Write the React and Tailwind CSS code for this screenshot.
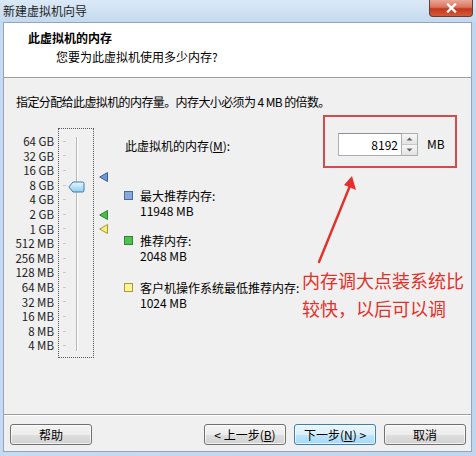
import React from "react";

const ROWS = ["64 GB", "32 GB", "16 GB", "8 GB", "4 GB", "2 GB", "1 GB", "512 MB", "256 MB", "128 MB", "64 MB", "32 MB", "16 MB", "8 MB", "4 MB"];

function Tri({ fill, stroke, top }) {
  return (
    <svg className="absolute left-[5px]" style={{ top }} width="9" height="10" viewBox="0 0 9 10">
      <polygon points="8.5,0.5 8.5,9.5 0.7,5" fill={fill} stroke={stroke} strokeWidth="1" />
    </svg>
  );
}

function Btn({ children, primary }) {
  return (
    <div
      className={
        "w-[82px] h-[21px] rounded-[3px] border flex items-center justify-center text-[12px] text-black shadow-[inset_0_0_0_1px_rgba(255,255,255,0.7)] " +
        (primary
          ? "border-[#3c7fb1] bg-[linear-gradient(#eaf6fd,#d9f0fc_50%,#bee6fd_51%,#a7d9f5)]"
          : "border-[#707070] bg-[linear-gradient(#f4f4f4,#ececec_50%,#dfdfdf_51%,#d2d2d2)]")
      }
    >
      {children}
    </div>
  );
}

function Item({ sq, border, label, value, mt }) {
  return (
    <div className={"flex " + mt}>
      <div className={"w-[9px] h-[9px] mt-[3px] border " + sq + " " + border} />
      <div className="ml-[7px] leading-[15px]">
        <div>{label}</div>
        <div>{value}</div>
      </div>
    </div>
  );
}

export default function App() {
  return (
    <div className="w-[476px] h-[456px] relative overflow-hidden bg-[linear-gradient(90deg,#c7dbf0,#c0d6ee)] font-['Noto_Sans_CJK_SC','Noto_Sans',sans-serif] text-[12px] text-black flex flex-col">
      {/* title bar */}
      <div className="h-[22px] flex items-start justify-between bg-[linear-gradient(#dbe9f7,#c4d9ef)]">
        <div className="pl-[3px] mt-[3px] leading-[16px] text-[12px] text-[#1e1e1e]">新建虚拟机向导</div>
        <div className="mr-[3px] w-[44px] h-[17px] rounded-b-[4px] border border-t-0 border-[#6b3a30] bg-[linear-gradient(#eba797,#d8735f_45%,#c2391d_55%,#d65a35)] flex items-center justify-center">
          <svg width="11" height="10" viewBox="0 0 11 10">
            <path d="M2 1.5 L9 8.5 M9 1.5 L2 8.5" stroke="#ffffff" strokeWidth="2.4" strokeLinecap="square" />
          </svg>
        </div>
      </div>

      {/* panel */}
      <div className="ml-[3px] mr-[4px] flex-1 mb-[4px] border border-[#8fa6c2] flex flex-col bg-[#f0f0f0]">
        {/* header */}
        <div className="h-[55px] bg-white border-b border-[#a0a0a0] pt-[7px]">
          <div className="pl-[24px] font-bold leading-[16px]">此虚拟机的内存</div>
          <div className="pl-[52px] mt-[3px] leading-[16px]">您要为此虚拟机使用多少内存?</div>
        </div>

        {/* content */}
        <div className="h-[336px] flex flex-col">
          <div className="pl-[12px] pt-[16px] leading-[16px] tracking-[-0.6px]">指定分配给此虚拟机的内存量。内存大小必须为 4 MB 的倍数。</div>
          <div className="flex mt-[5px]">
            {/* labels */}
            <div className="w-[50px] mt-[13px] pt-[6px] flex flex-col items-end">
              {ROWS.map((r) => (
                <div key={r} className="h-[14.6px] leading-[14.6px] text-[11.5px] text-[#222]">{r}</div>
              ))}
            </div>
            {/* slider box */}
            <div className="ml-[4px] mt-[13px] w-[36px] h-[230px] border border-dotted border-[#555] relative flex">
              <div className="ml-[4px] pt-[5px] flex flex-col">
                {ROWS.map((r) => (
                  <div key={r} className="h-[14.6px] flex items-center">
                    <div className="w-[3px] h-[1px] bg-[#c8c8c8]" />
                  </div>
                ))}
              </div>
              <div className="ml-[10px] mt-[8px] h-[214px] w-[2px] border-l border-[#b8b8b8] bg-white" />
              <svg className="absolute left-[9px] top-[52px]" width="17" height="12" viewBox="0 0 17 12">
                <defs>
                  <linearGradient id="th" x1="0" y1="0" x2="0" y2="1">
                    <stop offset="0" stopColor="#e9f6fd" />
                    <stop offset="1" stopColor="#8fcdee" />
                  </linearGradient>
                </defs>
                <path d="M0.8 6 L5 1 H14.5 Q16 1 16 2.5 V9.5 Q16 11 14.5 11 H5 Z" fill="url(#th)" stroke="#3d7bad" strokeWidth="1" />
              </svg>
            </div>
            {/* markers */}
            <div className="w-[16px] mt-[13px] h-[230px] relative">
              <Tri fill="#6c98d6" stroke="#3d5f96" top={44} />
              <Tri fill="#4cbb4c" stroke="#2a8a2a" top={82} />
              <Tri fill="#f6ec7c" stroke="#a69a2c" top={96} />
            </div>

            {/* right column */}
            <div className="ml-[14px] flex flex-col">
              <div className="flex h-[53px]">
                <div className="w-[199px] pl-[1px] mt-[23px] leading-[16px]">
                  此虚拟机的内存(<span className="underline">M</span>):
                </div>
                <div className="w-[134px] h-[53px] border-2 border-[#d44b4b] flex items-start pt-[16px] pl-[13px]">
                  <div className="w-[64px] h-[23px] bg-white border border-[#abadb3] border-t-[#8d9097] flex items-center justify-end pr-[3px] leading-[16px]">8192</div>
                  <div className="w-[16px] h-[23px] flex flex-col border border-l-0 border-[#abadb3]">
                    <div className="flex-1 border-b border-[#c9c9c9] bg-[linear-gradient(#f7f7f7,#e3e3e3)] flex items-center justify-center">
                      <svg width="7" height="4" viewBox="0 0 7 4"><path d="M0.5 3.5 L3.5 0.5 L6.5 3.5 Z" fill="#606060" /></svg>
                    </div>
                    <div className="flex-1 bg-[linear-gradient(#f7f7f7,#e3e3e3)] flex items-center justify-center">
                      <svg width="7" height="4" viewBox="0 0 7 4"><path d="M0.5 0.5 L3.5 3.5 L6.5 0.5 Z" fill="#606060" /></svg>
                    </div>
                  </div>
                  <div className="ml-[9px] mt-[3px] leading-[16px]">MB</div>
                </div>
              </div>
              <Item sq="bg-[#86a9d9]" border="border-[#4a6b9c]" label="最大推荐内存:" value="11948 MB" mt="mt-[20px]" />
              <Item sq="bg-[#52bf52]" border="border-[#2a8a2a]" label="推荐内存:" value="2048 MB" mt="mt-[15px]" />
              <Item sq="bg-[#fbf49a]" border="border-[#a89a34]" label="客户机操作系统最低推荐内存:" value="1024 MB" mt="mt-[17px]" />
            </div>
          </div>
        </div>

        {/* divider */}
        <div className="h-[2px] border-t border-[#a0a0a0] bg-white" />

        {/* buttons */}
        <div className="flex-1 flex items-start pt-[8px] pl-[6px] pr-[5px]">
          <Btn>帮助</Btn>
          <div className="flex-1" />
          <div className="flex gap-[8px]">
            <Btn>&lt; 上一步(<span className="underline">B</span>)</Btn>
            <Btn primary>下一步(<span className="underline">N</span>) &gt;</Btn>
            <Btn>取消</Btn>
          </div>
        </div>
      </div>

      {/* annotation */}
      <svg className="absolute left-[300px] top-[165px]" width="70" height="105" viewBox="0 0 70 105">
        <line x1="19" y1="97" x2="49.5" y2="22" stroke="#e3302a" strokeWidth="2.4" strokeLinecap="round" />
        <polygon points="52,11 56,25 44,20" fill="#e3302a" />
      </svg>
      <div className="absolute left-[302px] top-[266px] text-[18px] leading-[28px] text-[#e3302a]">
        <div>内存调大点装系统比</div>
        <div>较快，以后可以调</div>
      </div>
    </div>
  );
}
